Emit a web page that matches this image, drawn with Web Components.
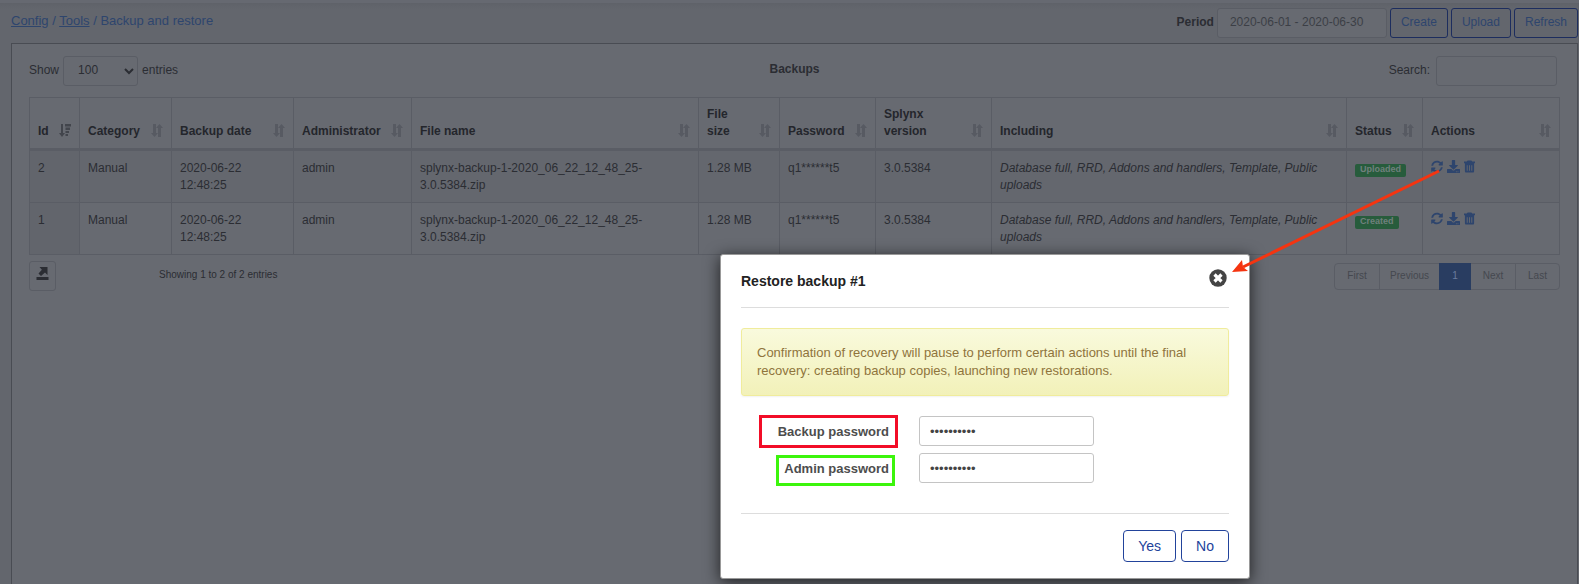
<!DOCTYPE html>
<html lang="en">
<head>
<meta charset="utf-8">
<title>Backup and restore</title>
<style>
:root{
  --page:#63666d; --panel:#676a71; --stripe:#64676e; --line:#5a5d65; --rule:#5a5d65;
  --text:#2b2d33; --muted:#3c3f46; --link:#2e456d; --primary:#1d2d5e;
}
body{margin:0;background:var(--page);color:var(--text);font:12px/17px "Liberation Sans",Arial,sans-serif}
</style>
</head>
<body>
<backup-page></backup-page>
<script>
const ICONS = {
  sort:['0 0 12 13','<path d="M2 0h3v9h2l-3.500 4L0 9h2zM8.500 0L12 4h-2v9H7V4H5z"/>'],
  sorted:['0 0 12 13','<path d="M2 0h2v9h2L3 13 0 9h2zM6 0h6v2.500H6zM6.500 3.500H11V6H6.500zM6.500 7H10v2H6.500zM6.500 10H9v2H6.500z"/>'],
  refresh:['0 0 512 512','<path d="M370.7 133.3C339.5 104 298.9 88 255.8 88c-77.5.1-144.3 53.2-162.8 126.9-1.3 5.400-6.1 9.2-11.7 9.2H24.1c-7.5 0-13.2-6.8-11.8-14.2C33.9 94.9 134.8 8 256 8c66.4 0 126.8 26.1 171.3 68.7L463 41c15.1-15.1 41-4.4 41 17v134c0 13.3-10.7 24-24 24H346c-21.4 0-32.1-25.9-17-41zM32 296h134c21.4 0 32.1 25.9 17 41l-41.8 41.8c31.3 29.3 71.8 45.3 114.9 45.3 77.4-.1 144.3-53.1 162.8-126.8 1.3-5.4 6.1-9.2 11.7-9.2h57.3c7.5 0 13.2 6.8 11.8 14.2C478.1 417.1 377.2 504 256 504c-66.4 0-126.8-26.1-171.3-68.7L49 471c-15.1 15.1-41 4.4-41-17V320c0-13.3 10.7-24 24-24z"/>'],
  download:['0 0 512 512','<path d="M216 0h80c13.3 0 24 10.7 24 24v168h87.7c17.8 0 26.7 21.5 14.1 34.1L269.7 378.3c-7.5 7.5-19.8 7.5-27.3 0L90.1 226.1c-12.6-12.6-3.7-34.1 14.1-34.1H192V24c0-13.3 10.7-24 24-24zm296 376v112c0 13.3-10.7 24-24 24H24c-13.3 0-24-10.7-24-24V376c0-13.3 10.7-24 24-24h146.7l49 49c20.1 20.1 52.5 20.1 72.6 0l49-49H488c13.3 0 24 10.7 24 24zm-124 88a20 20 0 1 0-40 0 20 20 0 0 0 40 0zm64 0a20 20 0 1 0-40 0 20 20 0 0 0 40 0z"/>'],
  trash:['0 0 12 13','<path fill-rule="evenodd" d="M4 0h4l1 1h3v2H0V1h3zM1 3h10v9q0 1-1 1H2q-1 0-1-1zM3 5v6h1V5zM5.5 5v6h1V5zM8 5v6h1V5z"/>'],
  exporting:['0 0 12 13','<path d="M3 0h8v8L8.5 5.6 4.5 9 2 6.5 5.4 2.8zM0 10h12v3H0z"/>'],
  close:['0 0 18 18','<circle cx="9" cy="9" r="8.7"/><path d="M5.500 5.500l7 7M12.500 5.500l-7 7" fill="none" stroke="#fff" stroke-width="3.200"/>'],
  chevron:['0 0 10 7','<path d="M1 1l4 4 4-4" fill="none" stroke="currentColor" stroke-width="2"/>']
};

class Component extends HTMLElement{
  connectedCallback(){
    if(this.shadowRoot) return;
    const t=document.createElement('template');
    t.innerHTML='<style>*{box-sizing:border-box}'+this.constructor.css+'</style>'+this.render();
    this.attachShadow({mode:'open'}).append(t.content.cloneNode(true));
  }
}

class UiIcon extends Component{
  static css=':host{display:inline-block;width:13px;height:13px}svg{display:block;width:100%;height:100%;fill:currentColor}';
  render(){const [box,body]=ICONS[this.getAttribute('name')];return `<svg viewBox="${box}" aria-hidden="true">${body}</svg>`;}
}

class UiButton extends Component{
  static css=`:host{display:block}
    button{display:block;height:30px;padding:0 10px 2px;border:1px solid var(--primary);border-radius:3px;background:none;color:var(--link);font:inherit;cursor:pointer}
    :host([large]) button{height:32px;padding:0 14px;border-color:#22439b;border-radius:4px;color:#22439b;font-size:14px}
    :host([quiet]) button{padding:0 6px;border-color:var(--line);color:var(--text)}`;
  render(){return `<button type="button" aria-label="${this.getAttribute('label')||this.textContent}"><slot></slot></button>`;}
}

class AppHeader extends Component{
  static css=`:host{box-sizing:border-box;display:flex;justify-content:space-between;align-items:center;height:43px;padding:3px 1px 0 11px;border-top:3px solid #666971;background:linear-gradient(#5f6269,var(--page) 6px)}
    nav,nav a{color:var(--link)}
    nav{padding-bottom:8px;font-size:13px}
    form{display:flex;gap:3px;padding-bottom:3px}
    label{display:flex;align-items:center;gap:3px;font-weight:bold}
    label span{padding-bottom:2px}
    input{width:170px;height:30px;padding:0 12px 2px;border:1px solid var(--line);border-radius:3px;background:var(--panel);color:var(--muted);font:inherit;font-weight:normal}`;
  render(){return `<nav aria-label="Breadcrumb"><a href="#config">Config</a> / <a href="#tools">Tools</a> / Backup and restore</nav>
    <form><label><span>Period</span><input value="2020-06-01 - 2020-06-30"></label>
    <ui-button>Create</ui-button><ui-button>Upload</ui-button><ui-button>Refresh</ui-button></form>`;}
}

class TableControls extends Component{
  static css=`:host{display:grid;grid-template-columns:1fr auto 1fr;align-items:center;height:30px}
    label{display:flex;align-items:center;gap:4px}
    label>span:not(.pick){padding-bottom:2px}
    .search{justify-self:end;gap:6px;padding-right:3px}
    .pick{display:grid;align-items:center}
    .pick>*{grid-area:1/1}
    ui-icon{justify-self:end;width:10px;height:7px;margin-right:4px;pointer-events:none}
    select,input{height:30px;border:1px solid var(--line);border-radius:3px;background:none;color:inherit;font:inherit}
    select{appearance:none;width:75px;padding:0 14px 2px}
    input{width:121px}
    h2{margin:0;padding-bottom:4px;font-size:12px}`;
  render(){return `<label><span>Show</span><span class="pick"><select><option>100</option></select><ui-icon name="chevron"></ui-icon></span><span>entries</span></label>
    <h2>Backups</h2>
    <label class="search"><span>Search:</span><input type="search"></label>`;}
}

class StatusLabel extends Component{
  static css=':host{display:inline-block;height:13px;padding:0 5px;border-radius:2px;background:#275c3c;color:#70807c;font-size:9px;line-height:10px;font-weight:bold}';
  render(){return '<slot></slot>';}
}

class BackupTable extends Component{
  static css=`:host{display:block}
    table{width:100%;table-layout:fixed;border-spacing:0;border:solid var(--line);border-width:1px 0 0 1px}
    th,td{padding:9px 8px 8px;border:solid var(--line);border-width:0 1px 1px 0;text-align:left;vertical-align:top}
    th{padding-top:8px;border-bottom:3px solid var(--rule);vertical-align:bottom;color:#24262c}
    th div{display:flex;justify-content:space-between;align-items:flex-end;gap:8px}
    th ui-icon{flex:none;width:12px;margin-bottom:3px;color:#575a62}
    th ui-icon[name=sorted]{color:#42454c}
    tbody tr:nth-child(odd){background:var(--stripe)}
    td:first-child{background:#62656c}
    status-label{margin-top:4px;vertical-align:top}
    .acts{display:flex;gap:4px;color:var(--link)}
    .acts a{display:block;height:13px;color:inherit}
    .acts ui-icon{display:block}
    .acts ui-icon[name=trash]{width:11px}
    .acts ui-icon[name=refresh]{width:12px}`;
  render(){
    const cols=[['Id',50],['Category',92],['Backup date',122],['Administrator',118],['File name',287],['File size',81],['Password',96],['Splynx version',116],['Including',0],['Status',76],['Actions',137]];
    const row=(id,status)=>`<tr><td>${id}</td><td>Manual</td><td>2020-06-22<br>12:48:25</td><td>admin</td><td>splynx-backup-1-2020_06_22_12_48_25-<br>3.0.5384.zip</td><td>1.28 MB</td><td>q1******t5</td><td>3.0.5384</td><td><i>Database full, RRD, Addons and handlers, Template, Public uploads</i></td><td><status-label>${status}</status-label></td><td><div class="acts"><a href="#restore" aria-label="Restore"><ui-icon name="refresh"></ui-icon></a><a href="#download" aria-label="Download"><ui-icon name="download"></ui-icon></a><a href="#delete" aria-label="Delete"><ui-icon name="trash"></ui-icon></a></div></td></tr>`;
    const head=name=>name==='File size'||name==='Splynx version'?name.replace(' ','<br>'):name;
    return `<table><colgroup>${cols.map(c=>`<col${c[1]?` style="width:${c[1]}px"`:''}>`).join('')}</colgroup>
      <thead><tr>${cols.map((c,i)=>`<th scope="col"><div><span>${head(c[0])}</span><ui-icon name="${i?'sort':'sorted'}"></ui-icon></div></th>`).join('')}</tr></thead>
      <tbody>${row(2,'Uploaded')}${row(1,'Created')}</tbody></table>`;
  }
}

class TablePager extends Component{
  static css=`:host{display:flex;align-items:center;height:30px;font-size:10px}
    .info{margin-left:103px;padding-bottom:3px}
    nav{display:flex;margin-left:auto;border:1px solid var(--line);border-radius:4px}
    a{min-width:44px;padding:3px 10px 5px;line-height:17px;text-align:center;color:#45484f;text-decoration:none;border-left:1px solid var(--line)}
    a:first-child{border:0}
    a[aria-current]{min-width:32px;margin:-1px 0;padding:4px 10px 6px;border:0;background:#293d61;color:#697c9e}
    a[aria-current]+a{border:0}`;
  render(){return `<ui-button quiet label="Export"><ui-icon name="exporting"></ui-icon></ui-button><span class="info">Showing 1 to 2 of 2 entries</span>
    <nav aria-label="Pages"><a href="#first">First</a><a href="#previous">Previous</a><a href="#1" aria-current="page">1</a><a href="#next">Next</a><a href="#last">Last</a></nav>`;}
}

class ModalDialog extends Component{
  static css=`:host{display:block;box-sizing:border-box;width:530px;padding:0 20px;border:1px solid #999;border-radius:3px;background:#fff;color:#4d4d4d;font-size:13px;box-shadow:0 3px 16px rgba(0,0,0,.7)}
    header{display:flex;justify-content:space-between;align-items:center;height:53px;border-bottom:1px solid #ddd}
    h1{margin:0;font-size:14px;line-height:18px;color:#222}
    header button{display:block;margin:0 2px 6px 0;padding:0;border:0;background:none;color:#444}
    header ui-icon{display:block;width:18px;height:18px}
    footer{display:flex;justify-content:flex-end;gap:5px;padding:16px 0;border-top:1px solid #ddd}
    main{padding:20px 0 23px}`;
  render(){return `<header><h1><slot name="title"></slot></h1><button type="button" aria-label="Close"><ui-icon name="close"></ui-icon></button></header><main><slot></slot></main><footer><slot name="actions"></slot></footer>`;}
}

class AlertBox extends Component{
  static css=':host{display:block;margin-bottom:20px;padding:15px;border:1px solid #f0ec9c;border-radius:3px;background:linear-gradient(#f9fadd,#f2f1b9);color:#8f743c;line-height:18px;box-shadow:0 1px 2px rgba(0,0,0,.06)}';
  render(){return '<slot></slot>';}
}

class PasswordField extends Component{
  static css=`:host{display:grid;grid-template:30px/154px 175px;column-gap:24px;align-items:center;height:30px;margin-bottom:7px}
    label{justify-self:end;height:31px;margin-bottom:-4px;padding:2px 3px 0 5px;border:3px solid var(--mark);font-weight:bold;line-height:17px;color:#4d4d4d}
    :host([wide]) label{height:33px;margin:0 -3px 0 0;padding:5px 6px 0 16px}
    input{width:100%;height:30px;padding:0 10px;border:1px solid #c4c4c4;border-radius:3px;font:inherit;color:#444;background:#fff}`;
  render(){return `<label for="field">${this.getAttribute('label')}</label><input id="field" type="password" value="0123456789">`;}
}

class RestoreDialog extends Component{
  static css=':host{display:block}';
  render(){return `<modal-dialog role="dialog" aria-label="Restore backup #1"><span slot="title">Restore backup #1</span>
    <alert-box>Confirmation of recovery will pause to perform certain actions until the final recovery: creating backup copies, launching new restorations.</alert-box>
    <password-field wide label="Backup password" style="--mark:#f20d27"></password-field>
    <password-field label="Admin password" style="--mark:#3cf50c"></password-field>
    <ui-button large slot="actions">Yes</ui-button><ui-button large slot="actions">No</ui-button></modal-dialog>`;}
}

class PointerArrow extends Component{
  static css=':host{display:block;width:210px;height:108px;pointer-events:none}svg{display:block;width:100%;height:100%}';
  render(){return `<svg viewBox="0 0 210 108" aria-hidden="true"><path d="M208 2L12 98" fill="none" stroke="#f53410" stroke-width="3"/><path d="M1 103l10-12 1 7 5 4z" fill="#f53410"/></svg>`;}
}

class BackupPage extends Component{
  static css=`:host{display:flex;flex-direction:column;position:relative;min-height:100vh}
    .panel{flex:1;display:flex;flex-direction:column;margin:0 1px 0 11px;padding:12px 17px 0;border:solid #494c53;border-width:1px 1px 0;background:var(--panel)}
    backup-table{margin-top:11px}
    table-pager{margin-top:6px}
    restore-dialog{position:absolute;top:254px;right:329px}
    pointer-arrow{position:absolute;top:169px;right:138px}`;
  render(){return `<app-header></app-header><section class="panel"><table-controls></table-controls><backup-table></backup-table><table-pager></table-pager></section><restore-dialog></restore-dialog><pointer-arrow></pointer-arrow>`;}
}

for(const [n,c] of Object.entries({'ui-icon':UiIcon,'ui-button':UiButton,'app-header':AppHeader,'table-controls':TableControls,'status-label':StatusLabel,'backup-table':BackupTable,'table-pager':TablePager,'modal-dialog':ModalDialog,'alert-box':AlertBox,'password-field':PasswordField,'restore-dialog':RestoreDialog,'pointer-arrow':PointerArrow,'backup-page':BackupPage})) customElements.define(n,c);
</script>
</body>
</html>
